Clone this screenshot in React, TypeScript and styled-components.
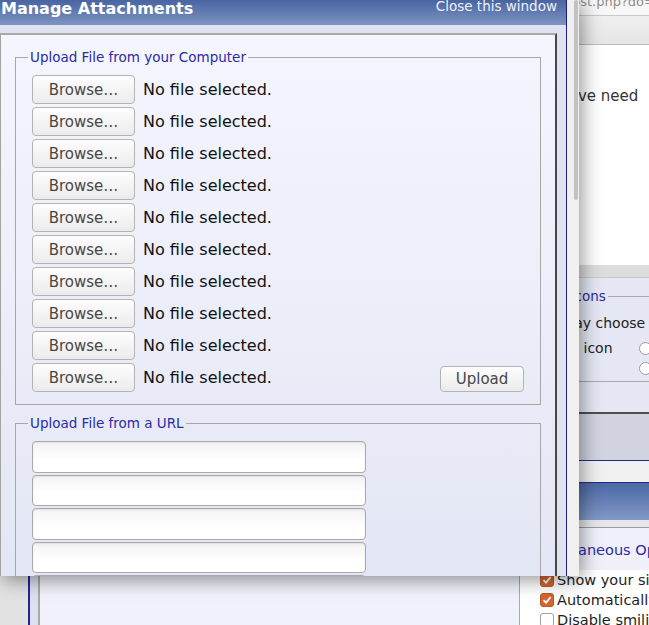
import React from 'react';
import styled, { createGlobalStyle } from 'styled-components';

const GlobalStyle = createGlobalStyle`
  html, body {
    margin: 0;
    padding: 0;
    overflow: hidden;
  }
  body {
    font-family: 'DejaVu Sans', Verdana, sans-serif;
    background: #ffffff;
  }
`;

const Screen = styled.div`
  position: relative;
  width: 649px;
  height: 625px;
  overflow: hidden;
`;

/* ---------- the page behind the popup ---------- */

const Backdrop = styled.div`
  display: flex;
  flex-direction: column;
  height: 100%;
  white-space: nowrap;
  color: #222;
`;

const AddressBar = styled.div`
  flex: none;
  height: 15px;
  padding-left: 564px;
  background: #f7f7f7;
  border-bottom: 1px solid #c9c9c9;
  overflow: hidden;
`;

const AddressText = styled.span`
  display: block;
  margin-top: -5px;
  font-size: 13px;
  line-height: 13px;
  color: #8d8d8d;
`;

const Toolbar = styled.div`
  flex: none;
  height: 28px;
  background: linear-gradient(to bottom, #efefef, #e6e6e6);
  border-bottom: 1px solid #bcbcbc;
`;

const MessageArea = styled.div`
  flex: none;
  height: 178px;
  padding: 42px 0 0 533px;
  background: #ffffff;
  font-size: 15px;
  line-height: 18px;
  color: #333;
`;

const GreyBand = styled.div`
  flex: none;
  height: 12px;
  background: #dddddd;
  border-bottom: 1px solid #c9c9c9;
`;

const IconsPanel = styled.div`
  flex: none;
  height: 134px;
  padding-left: 527px;
  background: #e5e8f4;
  overflow: hidden;
`;

const SideFieldset = styled.fieldset`
  margin: 10px -40px 0 0;
  padding: 9px 0 0 4px;
  height: 83px;
  border: 1px solid #a9a9a9;
  min-width: 0;
`;

const SideLegend = styled.legend`
  padding: 0 2px;
  margin-left: 4px;
  font-size: 13.5px;
  line-height: 16px;
  color: #2b2ba6;
`;

const SideLine = styled.div<{ $indent?: number; $space?: number }>`
  display: flex;
  align-items: center;
  height: 20px;
  margin-top: ${(p) => p.$space ?? 0}px;
  padding-left: ${(p) => p.$indent ?? 0}px;
  font-size: 14px;
  color: #222;
`;

const RadioDot = styled.span<{ $gap: number }>`
  display: inline-block;
  width: 11px;
  height: 11px;
  margin-left: ${(p) => p.$gap}px;
  border: 1px solid #9a9a9a;
  border-radius: 50%;
  background: #fff;
`;

const DarkShade = styled.div`
  flex: none;
  height: 46px;
  background: #d1d4e0;
  border-top: 2px solid #4e4e4e;
`;

const NavStrip = styled.div`
  flex: none;
  height: 21px;
  background: #f0f0f0;
  border-top: 1px solid #1f2a8a;
  border-bottom: 1px solid #1f2a8a;
`;

const BlueBar = styled.div`
  flex: none;
  height: 37px;
  background: linear-gradient(to bottom, #4b68a5, #8199c6);
`;

const PaleBand = styled.div`
  flex: none;
  height: 7px;
  background: #e6e7eb;
  border-bottom: 1px solid #9c9c9c;
`;

const LowerSection = styled.div`
  flex: 1;
  display: grid;
  grid-template-columns: 28px 492px 1fr;
`;

const Gutter = styled.div`
  background: #e2e2e2;
`;

const EditorFrame = styled.div`
  display: flex;
  padding-left: 8px;
  background: #dde1ef;
  border-left: 2px solid #2323a0;
`;

const EditorInner = styled.div`
  flex: 1;
  background: #f0f1fa;
  border-left: 2px solid #a9a9a9;
  border-right: 1px solid #a9a9a9;
`;

const OptionsColumn = styled.div`
  display: flex;
  flex-direction: column;
  background: #ffffff;
`;

const OptionsHead = styled.div`
  height: 42px;
  padding: 13px 0 0 9px;
  box-sizing: border-box;
  background: #eff0fa;
  font-size: 14.5px;
  line-height: 18px;
  color: #2b2ba6;
`;

const OptionRow = styled.div`
  display: flex;
  align-items: center;
  gap: 3px;
  height: 20px;
  padding-left: 20px;
  font-size: 14.5px;
  color: #1e1e1e;
`;

const CheckBox = styled.span<{ $checked?: boolean }>`
  display: inline-flex;
  align-items: center;
  justify-content: center;
  flex: none;
  width: 14px;
  height: 14px;
  box-sizing: border-box;
  border-radius: 3px;
  border: 1px solid ${(p) => (p.$checked ? '#b9552a' : '#a0a0a0')};
  background: ${(p) => (p.$checked ? '#d5662f' : '#ffffff')};
`;

/* ---------- popup window ---------- */

const Popup = styled.div`
  position: absolute;
  top: 0;
  left: 0;
  display: flex;
  width: 579px;
  height: 576px;
  box-shadow: 3px 4px 18px rgba(0, 0, 0, 0.42);
`;

const PopupBody = styled.div`
  display: flex;
  flex-direction: column;
  width: 566px;
  border-right: 1px solid #1c1c8e;
  background: #dfe3f0;
  overflow: hidden;
`;

const TitleBar = styled.div`
  flex: none;
  display: flex;
  justify-content: space-between;
  align-items: flex-start;
  height: 25px;
  background: linear-gradient(to bottom, #4864a2, #7d94c2);
  color: #ffffff;
  overflow: hidden;
`;

const Title = styled.h1`
  margin: 0;
  padding: 1px 0 0 1px;
  font-size: 16px;
  line-height: 16px;
  font-weight: bold;
`;

const CloseLink = styled.span`
  margin: -1px 9px 0 0;
  font-size: 13.5px;
  line-height: 14px;
  color: #eef1f8;
`;

const Content = styled.div`
  flex: 1;
  display: flex;
  min-height: 0;
  padding: 8px 9px 0 0;
`;

const Panel = styled.div`
  flex: 1;
  padding: 0 14px;
  border-top: 2px solid #a9a9a9;
  border-left: 1px solid #a3a3a3;
  border-right: 2px solid #474747;
  background: linear-gradient(to bottom, #f4f5fd, #e3e6f4);
`;

const Group = styled.fieldset<{ $top: number }>`
  margin: ${(p) => p.$top}px 0 0;
  padding: 10px 16px 12px;
  border: 1px solid #a7a7a7;
  min-width: 0;
`;

const Legend = styled.legend`
  margin-left: -4px;
  padding: 0 2px;
  font-size: 13.5px;
  line-height: 16px;
  color: #2b2ba6;
`;

const FileList = styled.div`
  display: flex;
  flex-direction: column;
  gap: 3px;
`;

const FileRow = styled.div`
  display: flex;
  align-items: center;
  height: 29px;
`;

const PlainButton = styled.button<{ $w: number; $h: number }>`
  flex: none;
  width: ${(p) => p.$w}px;
  height: ${(p) => p.$h}px;
  padding: 0;
  border: 1px solid #b3b3b3;
  border-radius: 4px;
  background: linear-gradient(to bottom, #fdfdfd, #ebebeb);
  font-family: 'DejaVu Sans', Verdana, sans-serif;
  font-size: 15px;
  color: #474747;
`;

const FileStatus = styled.span`
  margin-left: 8px;
  font-size: 16px;
  color: #111111;
`;

const UploadButton = styled(PlainButton)`
  margin-left: auto;
  align-self: flex-end;
`;

const UrlList = styled.div`
  display: flex;
  flex-direction: column;
  gap: 2px;
`;

const UrlInput = styled.input`
  box-sizing: border-box;
  width: 334px;
  height: 31.5px;
  margin: 0;
  border: 1px solid #a9a9a9;
  border-radius: 4px;
  background: linear-gradient(to bottom, #f3f3f3, #ffffff 60%);
  box-shadow: inset 0 1px 2px rgba(0, 0, 0, 0.08);
`;

const Scrollbar = styled.div`
  width: 12px;
  background: #f1f0ee;
`;

const Thumb = styled.div`
  width: 4px;
  height: 200px;
  margin-left: 7px;
  border-radius: 2px;
  background: #c2c2c2;
`;

function Check() {
  return (
    <svg width="10" height="10" viewBox="0 0 10 10">
      <path d="M1.5 5.2 L4 7.6 L8.6 2.2" fill="none" stroke="#fff" strokeWidth="1.8" />
    </svg>
  );
}

const fileSlots = Array.from({ length: 10 }, (_, i) => i);
const urlSlots = Array.from({ length: 5 }, (_, i) => i);

export default function App() {
  return (
    <Screen>
      <GlobalStyle />
      <Backdrop>
        <AddressBar>
          <AddressText>post.php?do=</AddressText>
        </AddressBar>
        <Toolbar />
        <MessageArea>we have need</MessageArea>
        <GreyBand />
        <IconsPanel>
          <SideFieldset>
            <SideLegend>Post Icons</SideLegend>
            <SideLine>You may choose</SideLine>
            <SideLine $indent={28} $space={5}>
              No icon
              <RadioDot $gap={26} />
            </SideLine>
            <SideLine $indent={28}>
              <RadioDot $gap={79} />
            </SideLine>
          </SideFieldset>
        </IconsPanel>
        <DarkShade />
        <NavStrip />
        <BlueBar />
        <PaleBand />
        <LowerSection>
          <Gutter />
          <EditorFrame>
            <EditorInner />
          </EditorFrame>
          <OptionsColumn>
            <OptionsHead>Miscellaneous Op</OptionsHead>
            <OptionRow>
              <CheckBox $checked>
                <Check />
              </CheckBox>
              Show your sig
            </OptionRow>
            <OptionRow>
              <CheckBox $checked>
                <Check />
              </CheckBox>
              Automatically
            </OptionRow>
            <OptionRow>
              <CheckBox />
              Disable smilie
            </OptionRow>
          </OptionsColumn>
        </LowerSection>
      </Backdrop>

      <Popup>
        <PopupBody>
          <TitleBar>
            <Title>Manage Attachments</Title>
            <CloseLink>Close this window</CloseLink>
          </TitleBar>
          <Content>
            <Panel>
              <Group $top={14}>
                <Legend>Upload File from your Computer</Legend>
                <FileList>
                  {fileSlots.map((i) => (
                    <FileRow key={i}>
                      <PlainButton $w={103} $h={29}>
                        Browse…
                      </PlainButton>
                      <FileStatus>No file selected.</FileStatus>
                      {i === fileSlots.length - 1 && (
                        <UploadButton $w={84} $h={26}>
                          Upload
                        </UploadButton>
                      )}
                    </FileRow>
                  ))}
                </FileList>
              </Group>
              <Group $top={10}>
                <Legend>Upload File from a URL</Legend>
                <UrlList>
                  {urlSlots.map((i) => (
                    <UrlInput key={i} type="text" />
                  ))}
                </UrlList>
              </Group>
            </Panel>
          </Content>
        </PopupBody>
        <Scrollbar>
          <Thumb />
        </Scrollbar>
      </Popup>
    </Screen>
  );
}
